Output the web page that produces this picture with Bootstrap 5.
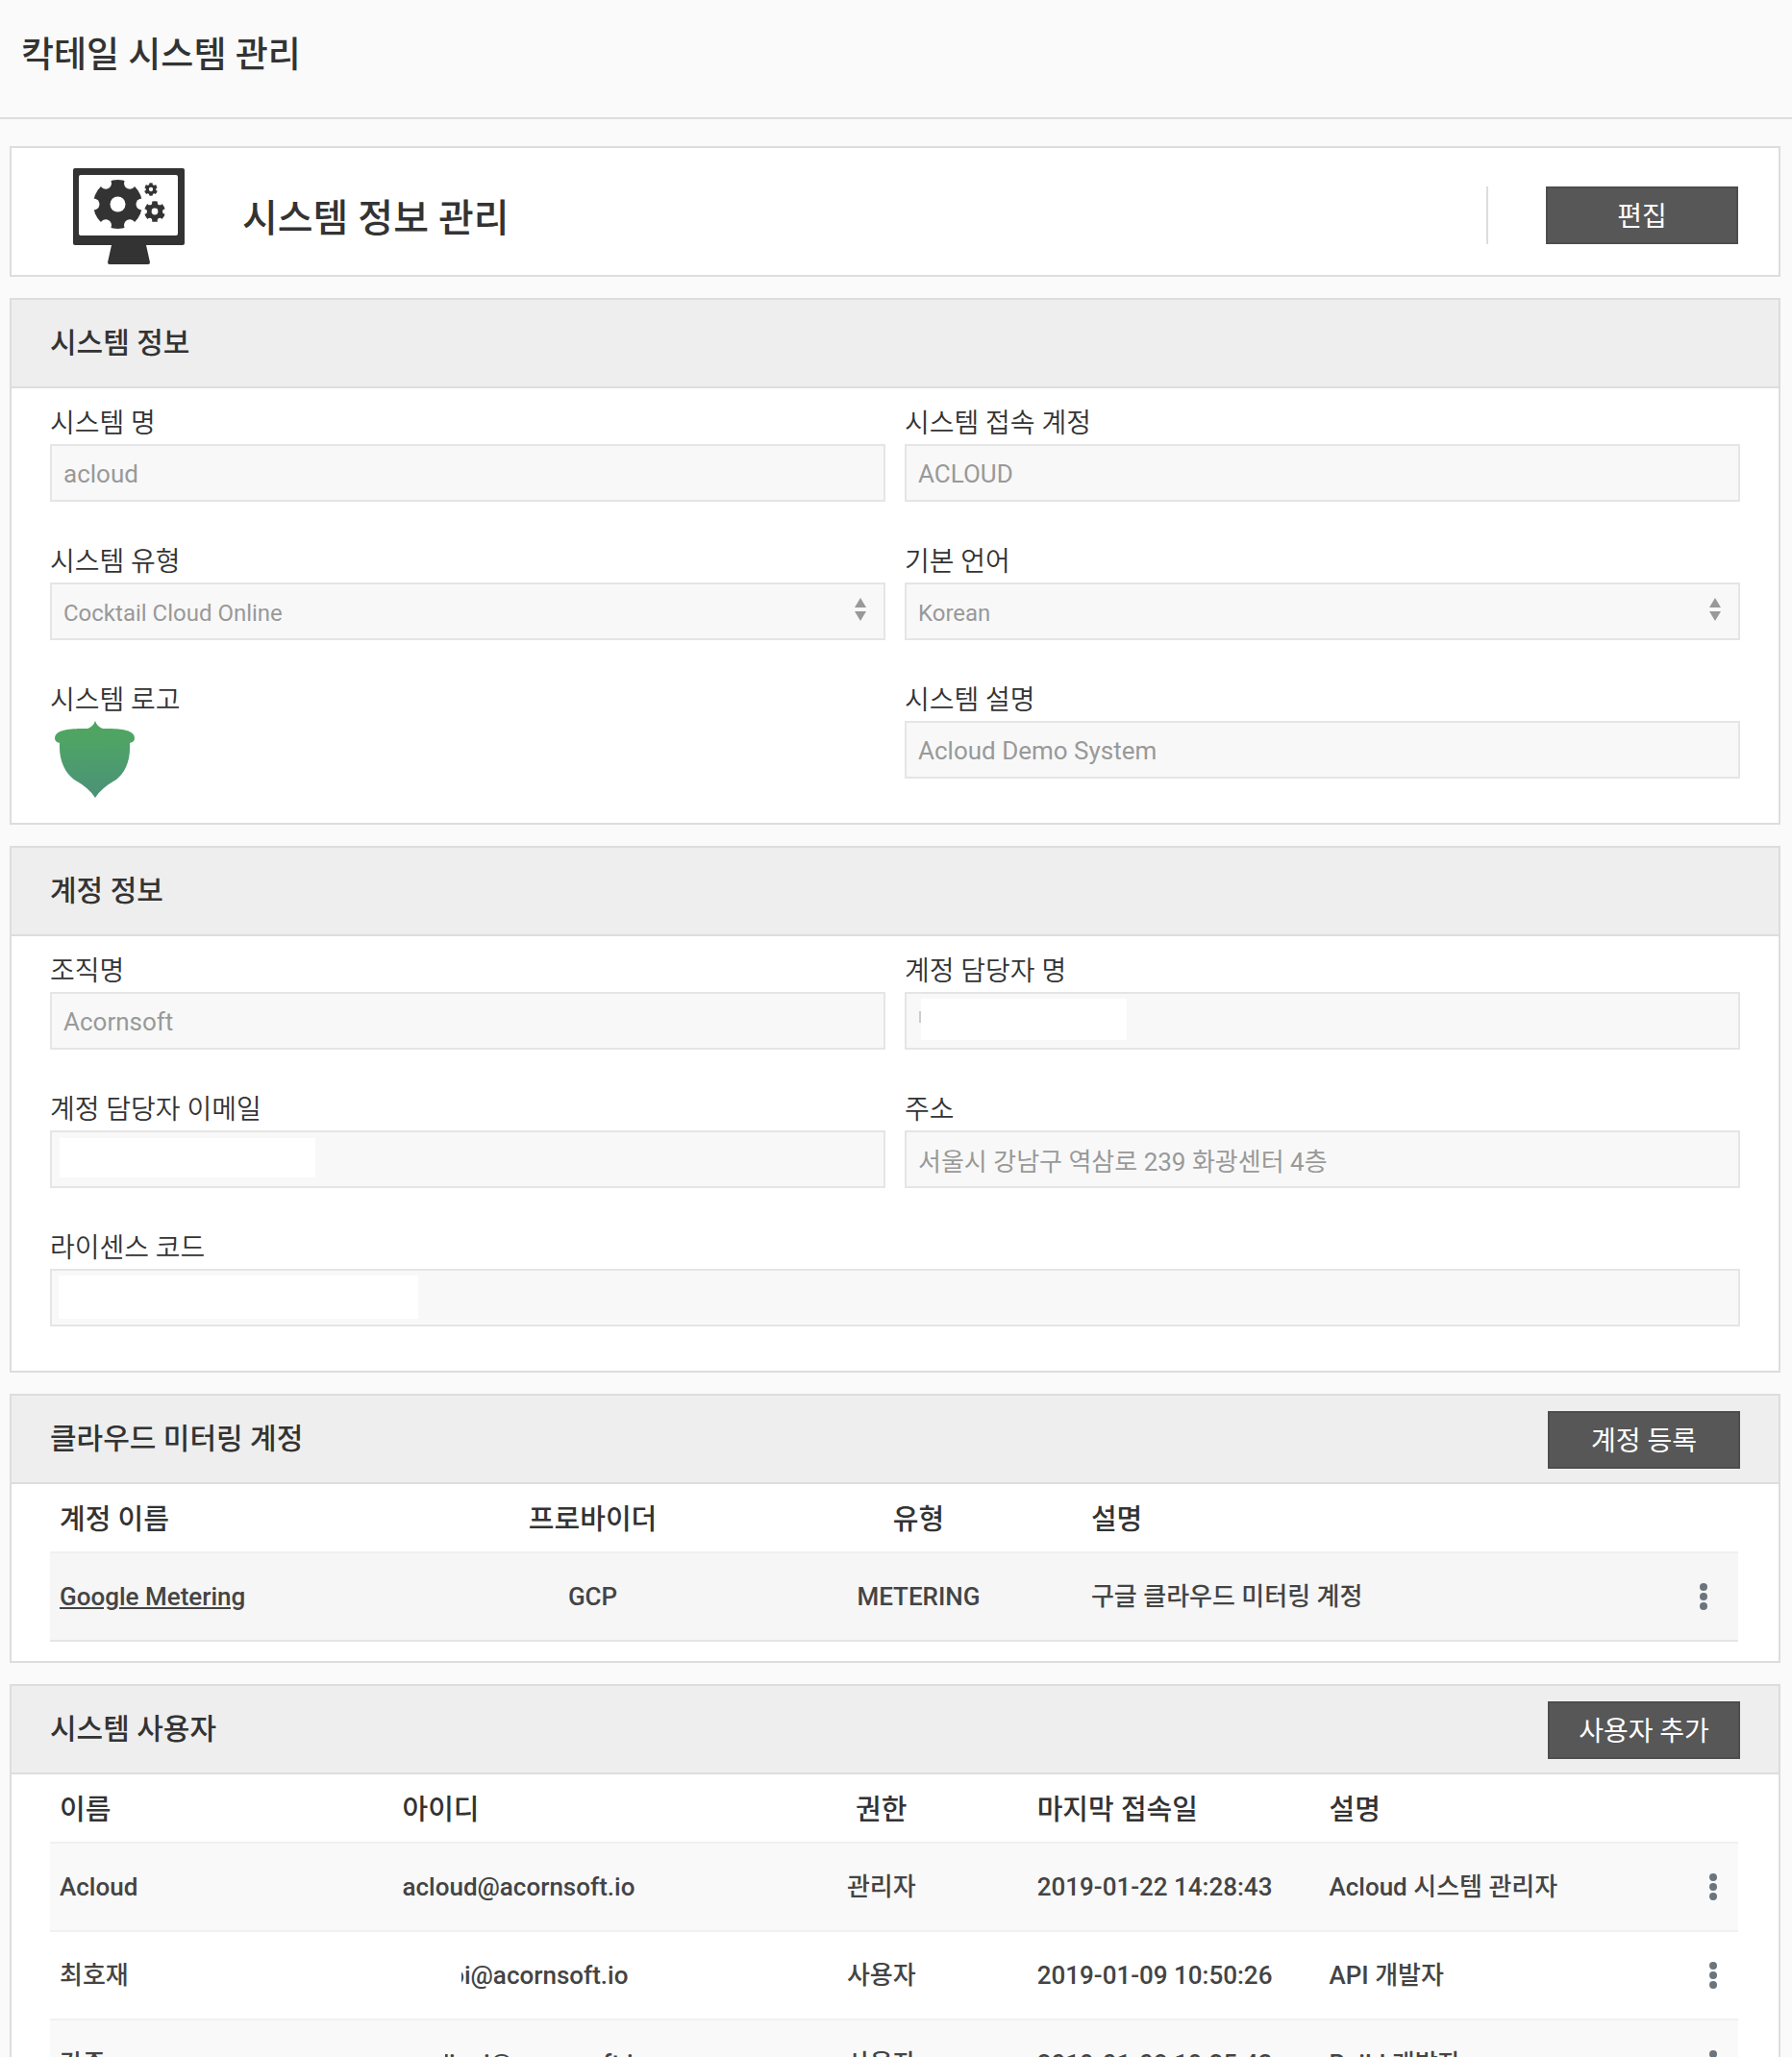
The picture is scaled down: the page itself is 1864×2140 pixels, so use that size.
<!DOCTYPE html>
<html lang="ko">
<head>
<meta charset="utf-8">
<meta name="viewport" content="width=device-width, initial-scale=1">
<title>칵테일 시스템 관리</title>
<link rel="stylesheet" href="https://cdn.jsdelivr.net/npm/bootstrap@5.3.0/dist/css/bootstrap.min.css">
<style>
  body { font-family: Roboto, "Noto Sans CJK KR", sans-serif; color: #333; background: #fafafa; height: 100vh; overflow: hidden; }
  .page-head { height: 124px; padding: 0 22px 6px; border-bottom: 2px solid #ddd; }
  .page-title { font-size: 37px; line-height: 56px; font-weight: 500; }
  .stack { padding: 28px 12px 22px 10px; gap: 22px; }
  .panel { border: 2px solid #ddd; border-radius: 0; color: #333; }
  .hero { height: 136px; padding: 8px 42px 0 64px; }
  .hero-icon { margin-top: 2px; }
  .hero-title { font-size: 40px; line-height: 58px; font-weight: 500; margin-left: 60px; padding-top: 8px; }
  .hero-action { border-left: 2px solid #ddd; padding-left: 60px; }
  .panel-head { height: 92px; padding: 0 40px; background: #eee; border-bottom: 2px solid #ddd; }
  .panel-head:first-child { border-radius: 0; }
  .panel-title { font-size: 30px; line-height: 44px; font-weight: 500; }
  .btn-flat { width: 200px; height: 60px; padding: 4px 0 0; border: 2px solid #4d4d4d; border-radius: 0; background: #575757; color: #fff; font-size: 28px; line-height: 40px; }
  .panel-head .btn-flat { margin-top: 2px; }
  .panel-form { padding: 12px 40px 8px; }
  .field-row { --bs-gutter-x: 20px; }
  .field-label { display: block; font-size: 28px; line-height: 46px; height: 46px; padding-top: 2px; font-weight: 350; margin: 0; }
  .field-block { margin-bottom: 38px; }
  .field-box { display: block; width: 100%; height: 60px; padding: 2px 12px 0; border: 2px solid #e5e5e5; border-radius: 0; font-size: 26px; line-height: 40px; appearance: none; }
  .field-box:disabled { background-color: #f8f8f8; color: #999; opacity: 1; }
  select.field-box { font-size: 24px; padding-top: 4px; }
  .field-ko { padding-top: 0; }
  .sort-mark { position: absolute; right: 20px; top: 16px; pointer-events: none; }
  .blank { position: absolute; background: #fff; }
  .blank-name { left: 17px; top: 7px; width: 214px; height: 43px; }
  .blank-mail { left: 10px; top: 8px; width: 266px; height: 41px; }
  .blank-code { left: 9px; top: 7px; width: 374px; height: 45px; }
  .blank-tick { left: 15px; top: 20px; width: 2px; height: 12px; background: #ccc; }
  .logo-mark { display: block; margin-left: 5px; }
  .panel-table { padding: 0 42px 20px 40px; }
  .grid-table { width: 100%; table-layout: fixed; border-collapse: separate; border-spacing: 0; margin: 0; font-size: 26px; line-height: 40px; font-weight: 500; }
  .grid-table th { height: 70px; padding: 4px 10px 0; font-size: 29px; font-weight: 500; color: #333; border: 0; vertical-align: middle; }
  .grid-table td { height: 92px; padding: 0 10px; border: 0; border-top: 2px solid #f0f0f0; color: #444; vertical-align: middle; }
  .grid-table .shade td { background: #f9f9f9; }
  .grid-table .metering td { height: 94px; background: #f6f6f6; border-bottom: 2px solid #e5e5e5; }
  .grid-table a { color: #444; }
  .grid-table .menu-cell { padding: 0; }
  .w-a1 { width: 22.5%; } .w-a2 { width: 19.3%; } .w-a4 { width: 72px; }
  .w-b1 { width: 20.3%; } .w-b2 { width: 17.3%; } .w-b4 { width: 52px; }
  .more-btn { display: flex; border: 0; background: none; padding: 0; margin: 0 auto; }
  .clip-id { display: flex; justify-content: flex-end; overflow: hidden; white-space: nowrap; }
  .clip-short { width: 173px; margin-left: 62px; }
  .clip-long { width: 210px; margin-left: 45px; }
</style>
<script src="https://cdn.jsdelivr.net/npm/bootstrap@5.3.0/dist/js/bootstrap.bundle.min.js"></script>
</head>
<body>
<svg width="0" height="0" class="position-absolute" aria-hidden="true">
  <symbol id="dots" viewBox="0 0 8 28"><circle cx="4" cy="4" r="4"/><circle cx="4" cy="14" r="4"/><circle cx="4" cy="24" r="4"/></symbol>
  <symbol id="sort" viewBox="0 0 12 24"><path d="M6 0l6 10H0zM6 24l6-10H0z"/></symbol>
  <symbol id="gear" viewBox="-26 -26 52 52">
    <circle r="25.5" fill="#333"/>
    <g fill="#fff"><circle r="8"/><circle cx="25" r="6"/><circle cx="-25" r="6"/><circle cx="12.5" cy="21.7" r="6"/><circle cx="-12.5" cy="21.7" r="6"/><circle cx="12.5" cy="-21.7" r="6"/><circle cx="-12.5" cy="-21.7" r="6"/></g>
  </symbol>
</svg>
<header class="page-head d-flex align-items-center">
  <h1 class="page-title m-0">칵테일 시스템 관리</h1>
</header>
<main class="stack d-flex flex-column">
  <section class="panel card hero flex-row align-items-center">
    <svg class="hero-icon" width="116" height="100" viewBox="0 0 116 100" fill="#333" aria-hidden="true">
      <path fill-rule="evenodd" d="M2 0h112q2 0 2 2v76q0 2-2 2H76l4 18q0 2-2 2H38q-2 0-2-2l4-18H2q-2 0-2-2V2q0-2 2-2zM8 7q-2 0-2 2v59q0 2 2 2h99q2 0 2-2V9q0-2-2-2z"/>
      <use href="#gear" x="20.5" y="11.5" width="52" height="52"/>
      <use href="#gear" x="74" y="34" width="22" height="22"/>
      <use href="#gear" x="74" y="15" width="14" height="14"/>
    </svg>
    <h2 class="hero-title mb-0">시스템 정보 관리</h2>
    <div class="hero-action ms-auto"><button type="button" class="btn btn-flat">편집</button></div>
  </section>

  <section class="panel card">
    <div class="panel-head d-flex align-items-center"><h3 class="panel-title m-0">시스템 정보</h3></div>
    <div class="panel-form">
      <div class="row field-row">
        <div class="col-6 field-block"><label class="field-label" for="sysName">시스템 명</label><input type="text" class="field-box" id="sysName" value="acloud" disabled></div>
        <div class="col-6 field-block"><label class="field-label" for="sysAccount">시스템 접속 계정</label><input type="text" class="field-box" id="sysAccount" value="ACLOUD" disabled></div>
        <div class="col-6 field-block"><label class="field-label" for="sysType">시스템 유형</label>
          <div class="position-relative"><select class="field-box" id="sysType" disabled><option>Cocktail Cloud Online</option></select><svg class="sort-mark" width="12" height="24" fill="#999" aria-hidden="true"><use href="#sort"/></svg></div></div>
        <div class="col-6 field-block"><label class="field-label" for="sysLang">기본 언어</label>
          <div class="position-relative"><select class="field-box" id="sysLang" disabled><option>Korean</option></select><svg class="sort-mark" width="12" height="24" fill="#999" aria-hidden="true"><use href="#sort"/></svg></div></div>
        <div class="col-6"><div class="field-label">시스템 로고</div>
          <svg class="logo-mark" width="84" height="80" viewBox="0 0 84 80" role="img" aria-label="Acloud">
            <defs><linearGradient id="leaf" x1="0" y1="0" x2="0" y2="1"><stop offset="0" stop-color="#50a55f"/><stop offset=".25" stop-color="#4fa465"/><stop offset="1" stop-color="#4a9179"/></linearGradient></defs>
            <path fill="url(#leaf)" d="M42 0Q44 6 50 8C64 8 83 8 83 18Q83 22 78 23C79 42 73 54 64 61Q48 70 42 80Q36 70 20 61C11 54 4 42 5 23Q0 22 0 18C0 8 20 8 34 8Q40 6 42 0z"/>
          </svg></div>
        <div class="col-6 field-block"><label class="field-label" for="sysDesc">시스템 설명</label><input type="text" class="field-box" id="sysDesc" value="Acloud Demo System" disabled></div>
      </div>
    </div>
  </section>

  <section class="panel card">
    <div class="panel-head d-flex align-items-center"><h3 class="panel-title m-0">계정 정보</h3></div>
    <div class="panel-form">
      <div class="row field-row">
        <div class="col-6 field-block"><label class="field-label" for="orgName">조직명</label><input type="text" class="field-box" id="orgName" value="Acornsoft" disabled></div>
        <div class="col-6 field-block"><label class="field-label" for="mgrName">계정 담당자 명</label>
          <div class="position-relative"><input type="text" class="field-box" id="mgrName" disabled><span class="blank blank-tick"></span><span class="blank blank-name"></span></div></div>
        <div class="col-6 field-block"><label class="field-label" for="mgrMail">계정 담당자 이메일</label>
          <div class="position-relative"><input type="email" class="field-box" id="mgrMail" disabled><span class="blank blank-mail"></span></div></div>
        <div class="col-6 field-block"><label class="field-label" for="address">주소</label><input type="text" class="field-box field-ko" id="address" value="서울시 강남구 역삼로 239 화광센터 4층" disabled></div>
        <div class="col-12 field-block"><label class="field-label" for="license">라이센스 코드</label>
          <div class="position-relative"><input type="text" class="field-box" id="license" disabled><span class="blank blank-code"></span></div></div>
      </div>
    </div>
  </section>

  <section class="panel card">
    <div class="panel-head d-flex align-items-center justify-content-between"><h3 class="panel-title m-0">클라우드 미터링 계정</h3><button type="button" class="btn btn-flat">계정 등록</button></div>
    <div class="panel-table">
      <table class="grid-table">
        <thead><tr><th class="w-a1">계정 이름</th><th class="w-a2 text-center">프로바이더</th><th class="w-a2 text-center">유형</th><th>설명</th><th class="w-a4"></th></tr></thead>
        <tbody>
          <tr class="metering"><td><a href="#">Google Metering</a></td><td class="text-center">GCP</td><td class="text-center">METERING</td><td>구글 클라우드 미터링 계정</td><td class="menu-cell"><button type="button" class="more-btn" aria-label="메뉴"><svg width="8" height="28" fill="#6c757d"><use href="#dots"/></svg></button></td></tr>
        </tbody>
      </table>
    </div>
  </section>

  <section class="panel card">
    <div class="panel-head d-flex align-items-center justify-content-between"><h3 class="panel-title m-0">시스템 사용자</h3><button type="button" class="btn btn-flat">사용자 추가</button></div>
    <div class="panel-table">
      <table class="grid-table">
        <thead><tr><th class="w-b1">이름</th><th class="w-b1">아이디</th><th class="w-b2 text-center">권한</th><th class="w-b2">마지막 접속일</th><th>설명</th><th class="w-b4"></th></tr></thead>
        <tbody>
          <tr class="shade"><td>Acloud</td><td>acloud@acornsoft.io</td><td class="text-center">관리자</td><td>2019-01-22 14:28:43</td><td>Acloud 시스템 관리자</td><td class="menu-cell"><button type="button" class="more-btn" aria-label="메뉴"><svg width="8" height="28" fill="#6c757d"><use href="#dots"/></svg></button></td></tr>
          <tr><td>최호재</td><td><span class="clip-id clip-short">oi@acornsoft.io</span></td><td class="text-center">사용자</td><td>2019-01-09 10:50:26</td><td>API 개발자</td><td class="menu-cell"><button type="button" class="more-btn" aria-label="메뉴"><svg width="8" height="28" fill="#6c757d"><use href="#dots"/></svg></button></td></tr>
          <tr class="shade"><td>강준</td><td><span class="clip-id clip-long">dinoi@acornsoft.io</span></td><td class="text-center">사용자</td><td>2019-01-08 19:25:43</td><td>Build 개발자</td><td class="menu-cell"><button type="button" class="more-btn" aria-label="메뉴"><svg width="8" height="28" fill="#6c757d"><use href="#dots"/></svg></button></td></tr>
        </tbody>
      </table>
    </div>
  </section>
</main>
</body>
</html>
